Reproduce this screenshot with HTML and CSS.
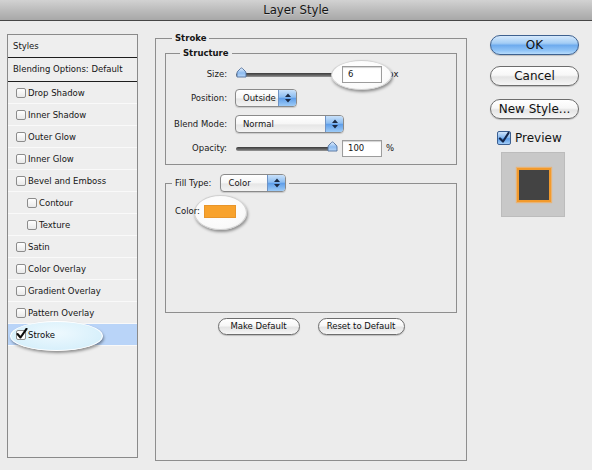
FILE: index.html
```html
<!DOCTYPE html>
<html>
<head>
<meta charset="utf-8">
<title>Layer Style</title>
<link rel="stylesheet" href="styles.css">
</head>
<body>
<div class="window">
  <div class="titlebar">Layer Style</div>
  <div class="content">
    <div class="styles-panel">
      <div class="panel-head">Styles</div>
      <div class="panel-blend">Blending Options: Default</div>
      <div class="item"><span class="cb"></span><span class="lbl">Drop Shadow</span></div>
      <div class="item"><span class="cb"></span><span class="lbl">Inner Shadow</span></div>
      <div class="item"><span class="cb"></span><span class="lbl">Outer Glow</span></div>
      <div class="item"><span class="cb"></span><span class="lbl">Inner Glow</span></div>
      <div class="item"><span class="cb"></span><span class="lbl">Bevel and Emboss</span></div>
      <div class="item sub"><span class="cb"></span><span class="lbl">Contour</span></div>
      <div class="item sub"><span class="cb"></span><span class="lbl">Texture</span></div>
      <div class="item"><span class="cb"></span><span class="lbl">Satin</span></div>
      <div class="item"><span class="cb"></span><span class="lbl">Color Overlay</span></div>
      <div class="item"><span class="cb"></span><span class="lbl">Gradient Overlay</span></div>
      <div class="item"><span class="cb"></span><span class="lbl">Pattern Overlay</span></div>
      <div class="item selected">
        <span class="cb checked"><svg class="tick" viewBox="0 0 12 12" width="12" height="12"><path d="M1.5 6 L4.5 9.5 L10.5 0.8" fill="none" stroke="#0d0d0d" stroke-width="2.1" stroke-linecap="round" stroke-linejoin="round"/></svg></span><span class="lbl bold-ish">Stroke</span>
      </div>
    </div>

    <div class="main-col">
      <div class="group stroke-group">
        <div class="legend">Stroke</div>
        <div class="group structure">
          <div class="legend legend-structure">Structure</div>
          <div class="form">
            <div class="row row-size">
              <span class="label">Size:</span>
              <span class="slider">
                <span class="track"></span>
                <svg class="thumb thumb-left" viewBox="0 0 11 11" width="11" height="11"><defs><linearGradient id="tg1" x1="0" y1="0" x2="0" y2="1"><stop offset="0" stop-color="#e6f1fd"/><stop offset="0.55" stop-color="#8dbbef"/><stop offset="1" stop-color="#b9d8fa"/></linearGradient></defs><path d="M1 10 V6 Q1 5 2 4 L4.6 1.4 Q5.5 0.5 6.4 1.4 L9 4 Q10 5 10 6 V10 Z" fill="url(#tg1)" stroke="#506f9c" stroke-width="0.9"/></svg>
              </span>
              <span class="field-wrap"><span class="field">6</span></span>
              <span class="unit">px</span>
            </div>
            <div class="row row-position">
              <span class="label">Position:</span>
              <span class="select sel-position"><span class="sel-text">Outside</span><span class="stepper"><svg viewBox="0 0 8 12" width="8" height="12"><path d="M4 1.5 L7 5 H1 Z M4 10.5 L7 7 H1 Z" fill="#1b2a44"/></svg></span></span>
            </div>
            <div class="row row-blend">
              <span class="label">Blend Mode:</span>
              <span class="select sel-blend"><span class="sel-text">Normal</span><span class="stepper"><svg viewBox="0 0 8 12" width="8" height="12"><path d="M4 1.5 L7 5 H1 Z M4 10.5 L7 7 H1 Z" fill="#1b2a44"/></svg></span></span>
            </div>
            <div class="row row-opacity">
              <span class="label">Opacity:</span>
              <span class="slider">
                <span class="track"></span>
                <svg class="thumb thumb-right" viewBox="0 0 11 11" width="11" height="11"><defs><linearGradient id="tg2" x1="0" y1="0" x2="0" y2="1"><stop offset="0" stop-color="#e6f1fd"/><stop offset="0.55" stop-color="#8dbbef"/><stop offset="1" stop-color="#b9d8fa"/></linearGradient></defs><path d="M1 10 V6 Q1 5 2 4 L4.6 1.4 Q5.5 0.5 6.4 1.4 L9 4 Q10 5 10 6 V10 Z" fill="url(#tg2)" stroke="#506f9c" stroke-width="0.9"/></svg>
              </span>
              <span class="field field-plain">100</span>
              <span class="unit unit-pct">%</span>
            </div>
          </div>
        </div>

        <div class="group fill">
          <div class="legend legend-fill">
            <span>Fill Type:</span>
            <span class="select sel-fill"><span class="sel-text">Color</span><span class="stepper"><svg viewBox="0 0 8 12" width="8" height="12"><path d="M4 1.5 L7 5 H1 Z M4 10.5 L7 7 H1 Z" fill="#1b2a44"/></svg></span></span>
          </div>
          <div class="color-row">
            <span class="color-label">Color:</span>
            <span class="swatch-wrap"><span class="swatch"></span></span>
          </div>
        </div>

        <div class="defaults">
          <span class="btn btn-small btn-make">Make Default</span>
          <span class="btn btn-small btn-reset">Reset to Default</span>
        </div>
      </div>
    </div>

    <div class="side-col">
      <span class="btn btn-big btn-ok">OK</span>
      <span class="btn btn-big btn-cancel">Cancel</span>
      <span class="btn btn-big btn-new">New Style...</span>
      <div class="preview-row">
        <span class="pcb"><svg viewBox="0 0 14 14" width="14" height="14"><path d="M3 7.5 L6 10.5 L11.5 2" fill="none" stroke="#14264a" stroke-width="2.2" stroke-linecap="round" stroke-linejoin="round"/></svg></span>
        <span class="preview-label">Preview</span>
      </div>
      <div class="preview-box"><div class="preview-square"></div></div>
    </div>
  </div>
</div>
</body>
</html>
```

FILE: styles.css
```css
* { box-sizing: border-box; }

html, body {
  margin: 0;
  padding: 0;
}

body {
  width: 592px;
  height: 470px;
  overflow: hidden;
  background: #ececec;
  font-family: "DejaVu Sans", "Liberation Sans", sans-serif;
  font-size: 8.5px;
  color: #151515;
}

.window {
  width: 592px;
  height: 470px;
  background: #ececec;
}

.titlebar {
  height: 21px;
  border-bottom: 1px solid #464646;
  background: linear-gradient(#d2d2d2, #bcbcbc 50%, #a8a8a8);
  text-align: center;
  font-size: 11.7px;
  line-height: 20px;
  color: #141414;
  text-shadow: 0 1px 0 rgba(255,255,255,0.35);
}

.content {
  display: flex;
  align-items: flex-start;
  padding-left: 7px;
}

/* ---------- styles list ---------- */
.styles-panel {
  margin-top: 13px;
  width: 131px;
  height: 424px;
  border: 1px solid #8a8a8a;
  background: #eeeeee;
}

.panel-head {
  height: 23px;
  line-height: 22px;
  padding-left: 5px;
  border-bottom: 1px solid #1e1e1e;
}

.panel-blend {
  height: 24px;
  line-height: 23px;
  padding-left: 5px;
  border-bottom: 1px solid #1e1e1e;
}

.item {
  position: relative;
  height: 22px;
  display: flex;
  align-items: center;
  padding-left: 8px;
  border-bottom: 1px solid #f9f9f9;
}

.item.sub { padding-left: 19px; }

.cb {
  position: relative;
  z-index: 2;
  width: 10px;
  height: 10px;
  border: 1px solid #8c8c8c;
  border-radius: 2px;
  background: linear-gradient(#ffffff, #e9e9e9);
  flex: none;
}

.lbl {
  position: relative;
  z-index: 2;
  margin-left: 2px;
}

.item.selected {
  background: #b9d4f8;
}

.item.selected::before {
  content: "";
  position: absolute;
  z-index: 1;
  left: 2px;
  top: -3px;
  width: 91px;
  height: 28px;
  border-radius: 50%;
  background: radial-gradient(ellipse at 50% 40%, #eef9fe 0%, #d8f0fb 70%, #c6e6f6 100%);
  border: 1px solid #ffffff;
  box-shadow: 1px 2px 3px rgba(0,0,0,0.4);
}

.cb.checked {
  background: #ffffff;
}

.tick {
  position: absolute;
  left: -1px;
  top: -3px;
}

.bold-ish { color: #0a0a0a; }

/* ---------- main groups ---------- */
.main-col {
  margin-left: 17px;
  margin-top: 17px;
  width: 312px;
}

.group {
  border: 1px solid #8e8e8e;
}

.stroke-group {
  width: 312px;
  height: 423px;
  padding: 0 9px;
}

.legend {
  display: block;
  width: max-content;
  margin: -7px 0 0 7px;
  padding: 0 3px;
  line-height: 13px;
  background: #ececec;
  font-weight: bold;
}

.structure {
  margin-top: 8px;
  width: 292px;
  height: 112px;
}

.legend-structure {
  margin-left: 14px;
}

.form {
  margin-top: 2px;
}

.row {
  display: flex;
  align-items: center;
}

.row-size { height: 24px; }
.row-position { height: 24px; }
.row-blend { height: 28px; }
.row-opacity { height: 20px; }

.label {
  width: 61px;
  text-align: right;
  margin-right: 8px;
  color: #1a1a1a;
}

.slider {
  position: relative;
  margin-left: 1px;
  width: 99px;
  height: 12px;
  display: flex;
  align-items: center;
}

.track {
  display: block;
  width: 100%;
  height: 4px;
  margin-top: 2px;
  border-radius: 2px;
  background: linear-gradient(#3a3a3a, #6a6a6a 60%, #9a9a9a);
}

.thumb {
  position: absolute;
  top: -1px;
}

.thumb-left { left: 0; }
.thumb-right { right: -3px; }

.field-wrap {
  position: relative;
  margin-left: 7px;
}

.field-wrap::before {
  content: "";
  position: absolute;
  z-index: 1;
  left: -11px;
  top: -6px;
  width: 59px;
  height: 28px;
  border-radius: 50%;
  background: radial-gradient(ellipse at 45% 40%, #ffffff 0%, #fbfbfb 65%, #ececec 100%);
  border: 1px solid #d0d0d0;
  box-shadow: 1px 2px 3px rgba(0,0,0,0.4);
}

.field {
  position: relative;
  z-index: 2;
  display: block;
  width: 40px;
  height: 17px;
  line-height: 15px;
  padding-left: 5px;
  background: #ffffff;
  border: 1px solid #9c9c9c;
  box-shadow: inset 0 1px 1px rgba(0,0,0,0.18);
}

.field-plain {
  margin-left: 7px;
}

.unit {
  margin-left: 6px;
}

.unit-pct { margin-left: 4px; }

.select {
  display: flex;
  height: 18px;
  border: 1px solid #8a8a8a;
  border-radius: 4px;
  overflow: hidden;
  background: linear-gradient(#ffffff, #f6f6f6 50%, #e6e6e6 55%, #f3f3f3);
  box-shadow: 0 1px 1px rgba(0,0,0,0.15);
  font-weight: normal;
}

.sel-text {
  flex: 1;
  padding-left: 7px;
  line-height: 16px;
}

.stepper {
  width: 18px;
  display: flex;
  align-items: center;
  justify-content: center;
  border-left: 1px solid #6f93c4;
  background: linear-gradient(#c9e1fa, #8cbdf1 45%, #5f9ee9 52%, #9dcbf7);
}

.sel-position { width: 62px; }
.sel-blend { width: 109px; }
.sel-fill { width: 66px; }

/* fill group */
.fill {
  margin-top: 18px;
  width: 292px;
  height: 130px;
}

.legend-fill {
  display: flex;
  align-items: center;
  margin: -10px 0 0 6px;
  height: 18px;
  line-height: 18px;
  font-weight: normal;
}

.legend-fill .sel-fill { margin-left: 9px; }

.color-row {
  display: flex;
  align-items: center;
  margin-top: 12px;
  height: 14px;
  padding-left: 9px;
}

.color-label {
  position: relative;
  z-index: 3;
  margin-right: 4px;
}

.swatch-wrap {
  position: relative;
  display: block;
}

.swatch-wrap::before {
  content: "";
  position: absolute;
  z-index: 1;
  left: -10px;
  top: -10px;
  width: 51px;
  height: 33px;
  border-radius: 50%;
  background: radial-gradient(ellipse at 45% 40%, #ffffff 0%, #fafafa 65%, #ececec 100%);
  border: 1px solid #d0d0d0;
  box-shadow: 1px 2px 3px rgba(0,0,0,0.4);
}

.swatch {
  position: relative;
  z-index: 2;
  display: block;
  width: 32px;
  height: 13px;
  background: #f8a22c;
  border: 1px solid #e8952a;
}

.defaults {
  display: flex;
  justify-content: center;
  gap: 18px;
  margin-top: 5px;
}

/* buttons */
.btn {
  display: block;
  text-align: center;
  border: 1px solid #6d6d6d;
  background: linear-gradient(#ffffff, #f7f7f7 45%, #e4e4e4 55%, #f6f6f6);
  box-shadow: 0 1px 1px rgba(0,0,0,0.2);
  color: #111;
}

.btn-small {
  height: 17px;
  line-height: 15px;
  border-radius: 9px;
}

.btn-make { width: 82px; }
.btn-reset { width: 87px; }

.side-col {
  margin-left: 23px;
  margin-top: 14px;
  width: 89px;
  display: flex;
  flex-direction: column;
}

.btn-big {
  width: 89px;
  height: 20px;
  line-height: 18px;
  border-radius: 10px;
  font-size: 12px;
}

.btn-ok {
  border-color: #3e618f;
  background: linear-gradient(#d6e9fc, #a3cdf5 40%, #6eabee 52%, #8fc3f6 80%, #b8dcfc);
}

.btn-cancel { margin-top: 11px; }
.btn-new { margin-top: 13px; }

.preview-row {
  display: flex;
  align-items: center;
  margin-top: 12px;
  padding-left: 7px;
  height: 14px;
}

.pcb {
  width: 14px;
  height: 14px;
  border: 1px solid #3c5f91;
  border-radius: 2px;
  background: linear-gradient(#cfe4fb, #7fb4ee 50%, #5a9be6 55%, #a3cdf8);
  display: flex;
}

.pcb svg { margin: -1px; }

.preview-label {
  margin-left: 4px;
  font-size: 12px;
}

.preview-box {
  margin-top: 7px;
  margin-left: 11px;
  width: 64px;
  height: 65px;
  background: #c8c8c8;
  border: 1px solid #bcbcbc;
  padding: 15px 0 0 15px;
}

.preview-square {
  width: 34px;
  height: 34px;
  background: #434343;
  border: 2px solid #f29a2c;
  box-shadow: 0 0 1px 1px rgba(247,170,80,0.7);
}
```
